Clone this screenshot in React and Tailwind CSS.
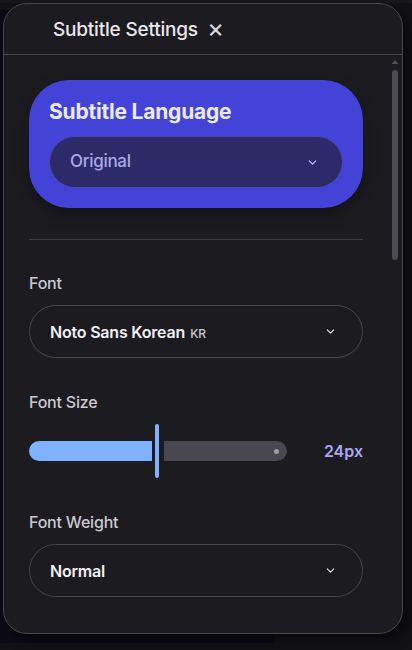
import React from "react";
import { ChevronDown } from "lucide-react";

const font = { fontFamily: "Inter, 'Noto Sans', sans-serif" };

function Select({ children }) {
  return (
    <div className="flex h-[53px] items-center justify-between rounded-full border border-[#48474e] pl-[20px] pr-[25px]">
      <div className="flex items-baseline gap-[5px] text-[16px] font-semibold tracking-[-0.2px] text-[#f1f0f5]">
        {children}
      </div>
      <ChevronDown size={13} strokeWidth={2} className="text-[#e4e4ea]" />
    </div>
  );
}

export default function App() {
  return (
    <div className="relative h-[650px] w-[412px] overflow-hidden bg-[#121214]" style={font}>
      <div className="absolute left-0 top-[10px] h-[633px] w-[275px] bg-[#0c0a14]" />
      <div className="absolute left-0 top-0 h-[3px] w-[412px] bg-[#18181b]" />
      <div className="relative ml-[3px] mt-[3px] flex h-[631px] w-[400px] flex-col overflow-hidden rounded-[24px] border border-[#47464d] bg-[#1c1b20] shadow-[6px_6px_12px_rgba(0,0,0,0.5)]">
        <div className="flex h-[51px] shrink-0 items-center gap-[9px] border-b border-[#47464d] pl-[49px] pt-[2px]">
          <span className="text-[19px] font-medium tracking-[-0.2px] text-[#e8e8ec]">Subtitle Settings</span>
          <span className="mb-[5px] text-[26px] leading-none text-[#d8d8dc]">×</span>
        </div>
        <div className="flex min-h-0 flex-1">
          <div className="flex w-[360px] flex-col pl-[25px] pr-[1px] pt-[25px]">
            <div className="flex flex-col gap-[12px] rounded-[40px] bg-[#4343d8] px-[20px] pb-[20px] pt-[20px] shadow-[0_6px_14px_rgba(0,0,0,0.35)]">
              <div className="h-[24px] text-[21px] font-bold leading-[24px] tracking-[-0.2px] text-[#ebebff]">Subtitle Language</div>
              <div className="flex h-[52px] items-center justify-between rounded-full border border-[#4a48a8] bg-[#2c2a68] pl-[20px] pr-[23px]">
                <span className="text-[17px] font-medium tracking-[-0.3px] text-[#aaa9e6]">Original</span>
                <ChevronDown size={13} strokeWidth={2} className="text-[#c8c8f5]" />
              </div>
            </div>
            <div className="mt-[31px] h-px w-full bg-[#3e3d44]" />
            <div className="mt-[33px] flex flex-col gap-[12px]">
              <div className="h-[20px] text-[16px] font-medium leading-[20px] tracking-[-0.2px] text-[#cac9d1]">Font</div>
              <Select>
                <span>Noto Sans Korean</span>
                <span className="text-[12px] font-medium text-[#c8c7d0]">KR</span>
              </Select>
            </div>
            <div className="mt-[34px] flex flex-col gap-[12px]">
              <div className="h-[20px] text-[16px] font-medium leading-[20px] tracking-[-0.2px] text-[#cac9d1]">Font Size</div>
              <div className="flex h-[54px] items-center">
                <div className="h-[20px] w-[123px] rounded-l-full bg-[#80b1ff]" />
                <div className="ml-[3px] h-[54px] w-[4px] rounded-full bg-[#80b1ff]" />
                <div className="ml-[5px] flex h-[20px] w-[123px] items-center justify-end rounded-r-full bg-[#49474f] pr-[8px]">
                  <div className="h-[5px] w-[5px] rounded-full bg-[#a09fa8]" />
                </div>
                <div className="ml-auto text-[16px] font-semibold tracking-[0px] text-[#a9a7f2]">24px</div>
              </div>
            </div>
            <div className="mt-[34px] flex flex-col gap-[12px]">
              <div className="h-[20px] text-[16px] font-medium leading-[20px] tracking-[-0.2px] text-[#cac9d1]">Font Weight</div>
              <Select>
                <span>Normal</span>
              </Select>
            </div>
          </div>
          <div className="ml-[28px] flex w-[6px] flex-col items-center pt-[5px]">
            <div className="h-0 w-0 border-x-[3px] border-b-[4px] border-x-transparent border-b-[#55545b]" />
            <div className="mt-[6px] h-[190px] w-[6px] rounded-full bg-[#4c4b52]" />
          </div>
        </div>
      </div>
    </div>
  );
}
